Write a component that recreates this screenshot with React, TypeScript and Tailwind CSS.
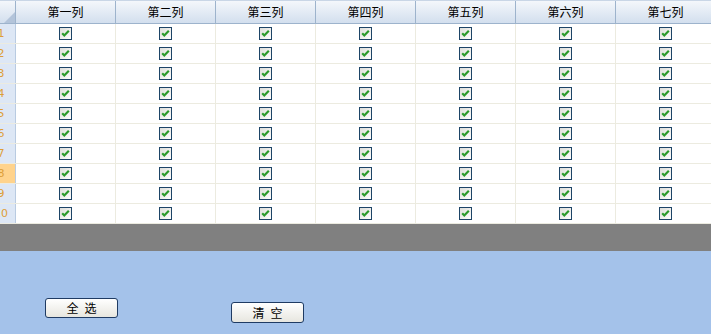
const columns = ['第一列', '第二列', '第三列', '第四列', '第五列', '第六列', '第七列']
const rows = [1, 2, 3, 4, 5, 6, 7, 8, 9, 10]

const font = { fontFamily: '"Noto Sans CJK SC", "DejaVu Sans", sans-serif' }

function CheckBox() {
  return (
    <svg width="13" height="13" viewBox="0 0 13 13">
      <defs>
        <linearGradient id="cbg" x1="0" y1="0" x2="1" y2="1">
          <stop offset="0" stopColor="#dcdcd7" />
          <stop offset="1" stopColor="#ffffff" />
        </linearGradient>
      </defs>
      <rect x="0.5" y="0.5" width="12" height="12" fill="url(#cbg)" stroke="#1d4466" />
      <path d="M3.2 6.2 L5.3 8.4 L9.8 3.8" fill="none" stroke="#2a9a2a" strokeWidth="2.2" />
    </svg>
  )
}

export default function App(): React.ReactElement {
  return (
    <div className="w-[711px] h-[334px] overflow-hidden flex flex-col bg-[#a4c2ea]" style={font}>
      <div className="bg-white flex flex-col w-[716px]">
        <div className="flex h-[24px] border-t border-[#c9d6e6] border-b border-b-[#9db3cc] bg-gradient-to-b from-[#f4f7fb] to-[#d3dfee]">
          <div className="w-[16px] shrink-0 border-r border-[#9db3cc] flex items-end justify-end">
            <svg width="11" height="11" viewBox="0 0 11 11">
              <path d="M11 0 L11 11 L0 11 Z" fill="#b3c4da" />
            </svg>
          </div>
          {columns.map((c) => (
            <div
              key={c}
              className="w-[100px] shrink-0 border-r border-[#9db3cc] flex items-center justify-center text-[12px] text-black leading-none"
            >
              {c}
            </div>
          ))}
        </div>
        {rows.map((r) => (
          <div key={r} className="flex h-[20px] border-b border-[#ecebe0]">
            <div
              className={`w-[16px] shrink-0 overflow-hidden border-r border-[#b9cbe1] flex items-center ${r === 8 ? 'bg-[#ffd38c]' : 'bg-[#dde7f5]'}`}
            >
              <div className="w-[30px] shrink-0 -ml-[14px] text-center text-[11px] text-[#dd9e37] leading-none" style={{ fontFamily: '"DejaVu Sans", sans-serif' }}>
                {r}
              </div>
            </div>
            {columns.map((c) => (
              <div
                key={c}
                className="w-[100px] shrink-0 border-r border-[#ecebe0] flex items-center justify-center"
              >
                <CheckBox />
              </div>
            ))}
          </div>
        ))}
      </div>
      <div className="h-[27px] bg-[#808080]" />
      <div className="flex items-start pl-[45px] pt-[47px] gap-[113px]">
        <button className="w-[73px] h-[20px] rounded-[3px] border border-[#1f3b63] bg-gradient-to-b from-white to-[#e7e6df] text-[12px] text-black leading-none tracking-[6px] pl-[6px]">
          全选
        </button>
        <button className="mt-[4px] w-[73px] h-[21px] rounded-[3px] border border-[#1f3b63] bg-gradient-to-b from-white to-[#e7e6df] text-[12px] text-black leading-none tracking-[6px] pl-[6px]">
          清空
        </button>
      </div>
    </div>
  )
}
